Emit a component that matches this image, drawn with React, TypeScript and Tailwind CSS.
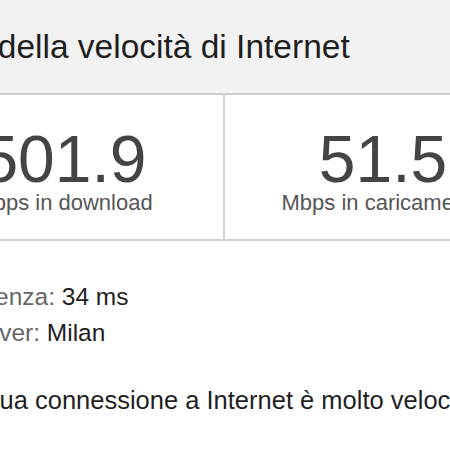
const stats = [
  { value: "501.9", label: "Mbps in download" },
  { value: "51.5", label: "Mbps in caricamento" },
];

const details = [
  { label: "Latenza:", value: "34 ms" },
  { label: "Server:", value: "Milan" },
];

export default function App() {
  return (
    <div className="w-[450px] h-[450px] overflow-hidden bg-white font-['Liberation_Sans',Arial,sans-serif]">
      <div className="ml-[-95px] w-[636px]">
        <div className="h-[95px] bg-[#f2f2f2] border-b-2 border-[#cdcdcd] pl-[22px] pt-[30px]">
          <h1 className="text-[33.5px] leading-none text-[#1f1f1f] whitespace-nowrap">
            Test della velocità di Internet
          </h1>
        </div>
        <div className="grid grid-cols-[320px_1fr] border-b-2 border-[#d2d2d2]">
          {stats.map((s, i) => (
            <div
              key={s.label}
              className={
                i === 0
                  ? "flex flex-col items-center pt-[31px] pb-[25px] border-r-2 border-[#d2d2d2]"
                  : "flex flex-col items-center pt-[31px] pb-[25px]"
              }
            >
              <div className="text-[66px] leading-none text-[#444] whitespace-nowrap">{s.value}</div>
              <div className="text-[22px] leading-none text-[#555] whitespace-nowrap">{s.label}</div>
            </div>
          ))}
        </div>
        <div className="pl-[56px] mt-[38px] text-[24.5px] leading-[36px]">
          {details.map((d) => (
            <div key={d.label} className="whitespace-nowrap">
              <span className="text-[#666]">{d.label}</span>{" "}
              <span className="text-[#1f1f1f]">{d.value}</span>
            </div>
          ))}
        </div>
        <p className="pl-[52px] mt-[31px] text-[25.5px] leading-[36px] text-[#1f1f1f] whitespace-nowrap">
          La tua connessione a Internet è molto veloce.
        </p>
      </div>
    </div>
  );
}
